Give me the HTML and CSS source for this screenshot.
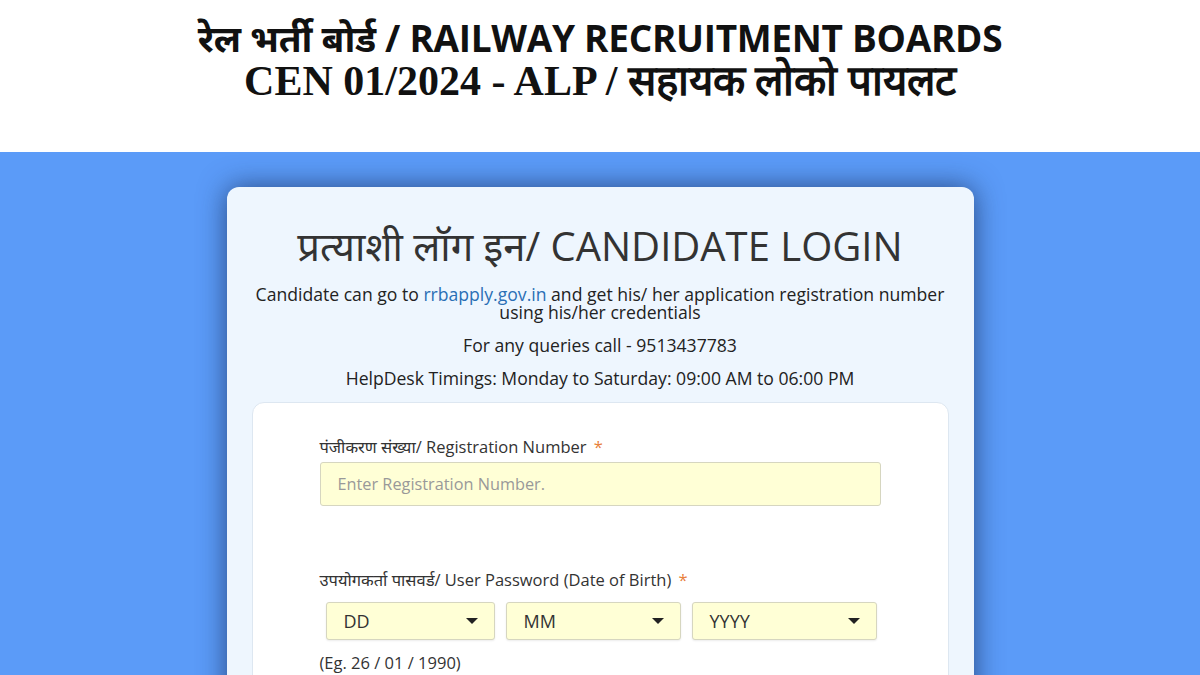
FILE: index.html
```html
<!DOCTYPE html>
<html lang="en">
<head>
    <meta charset="UTF-8">
    <meta name="viewport" content="width=device-width, initial-scale=1.0">
    <title>RRB - Candidate Login</title>
    <link rel="stylesheet" href="styles.css">
</head>
<body>
    <div class="top-banner">
        <div class="banner-line1">रेल भर्ती बोर्ड / RAILWAY RECRUITMENT BOARDS</div>
        <div class="banner-line2">CEN 01/2024 - ALP / सहायक लोको पायलट</div>
    </div>
    <div class="page-bg">
        <div class="login-card">
            <h2 class="login-title">प्रत्याशी लॉग इन/ CANDIDATE LOGIN</h2>
            <p class="info">Candidate can go to <a href="#">rrbapply.gov.in</a> and get his/ her application registration number<br>using his/her credentials</p>
            <p class="info">For any queries call - 9513437783</p>
            <p class="info">HelpDesk Timings: Monday to Saturday: 09:00 AM to 06:00 PM</p>
            <div class="form-box">
                <form>
                    <label class="field-label">पंजीकरण संख्या/ Registration Number <span class="req">*</span></label>
                    <input type="text" class="text-input" placeholder="Enter Registration Number.">
                    <label class="field-label second">उपयोगकर्ता पासवर्ड/ User Password (Date of Birth) <span class="req">*</span></label>
                    <div class="dob-row">
                        <div class="dob-select dd">DD <span class="caret"></span></div>
                        <div class="dob-select mm">MM <span class="caret"></span></div>
                        <div class="dob-select yy">YYYY <span class="caret"></span></div>
                    </div>
                    <div class="hint">(Eg. 26 / 01 / 1990)</div>
                </form>
            </div>
        </div>
    </div>
</body>
</html>
```
FILE: styles.css
```css
body {
    font-family: "Open Sans", "Noto Sans", sans-serif;
    margin: 0;
    padding: 0;
    background-color: #5b9bf8;
    height: 675px;
    overflow: hidden;
}
.top-banner {
    background-color: white;
    height: 152px;
    text-align: center;
    color: #111;
    padding-top: 16px;
    box-sizing: border-box;
}
.banner-line1 {
    font-family: "Open Sans", "Noto Sans", sans-serif;
    font-weight: bold;
    font-size: 37px;
    line-height: 44px;
    letter-spacing: -0.3px;
}
.banner-line2 {
    font-family: "Liberation Serif", serif;
    font-weight: bold;
    font-size: 42px;
    line-height: 42px;
}
.page-bg {
    padding-top: 35px;
}
.login-card {
    width: 747px;
    margin: 0 auto;
    background-color: #eef6fe;
    border-radius: 12px;
    box-shadow: 0 0 28px rgba(20, 40, 80, 0.7);
    padding: 34px 25px 40px;
    box-sizing: border-box;
    text-align: center;
    height: 600px;
}
.login-title {
    margin: 0 0 14px;
    font-size: 40px;
    font-weight: normal;
    color: #333;
    line-height: 50px;
}
.info {
    margin: 0 0 15px;
    font-size: 17.6px;
    line-height: 18px;
    color: #222;
}
.info a {
    color: #2a6fb5;
    text-decoration: none;
}
.form-box {
    background-color: white;
    border: 1px solid #dde7f1;
    border-radius: 12px;
    padding: 32px 67px;
    text-align: left;
    margin-top: 8px;
    height: 400px;
}
.field-label {
    display: block;
    font-size: 16.5px;
    color: #333;
    margin-bottom: 4px;
}
.field-label.second {
    margin-top: 62px;
    margin-bottom: 11px;
}
.req {
    color: #e8803a;
    margin-left: 3px;
}
.text-input {
    width: 100%;
    height: 44px;
    box-sizing: border-box;
    background-color: #ffffd6;
    border: 1px solid #d6d6c0;
    border-radius: 3px;
    padding: 0 17px;
    font-family: "Open Sans", sans-serif;
    font-size: 16.3px;
}
.text-input::placeholder {
    color: #999;
}
.dob-row {
    display: flex;
    gap: 11px;
    margin-left: 6px;
}
.dob-select {
    height: 38px;
    box-sizing: border-box;
    background-color: #ffffd6;
    border: 1px solid #d6d6c0;
    border-radius: 3px;
    box-shadow: 0 1px 2px rgba(0, 0, 0, 0.08);
    padding: 0 16px 0 17px;
    display: flex;
    align-items: center;
    justify-content: space-between;
    font-size: 18px;
    color: #333;
}
.dob-select.dd { width: 169px; }
.dob-select.mm { width: 175px; }
.dob-select.yy { width: 185px; }
.caret {
    width: 0;
    height: 0;
    border-left: 6px solid transparent;
    border-right: 6px solid transparent;
    border-top: 6px solid #222;
}
.hint {
    font-size: 16.5px;
    color: #333;
    margin-top: 11px;
}
```
